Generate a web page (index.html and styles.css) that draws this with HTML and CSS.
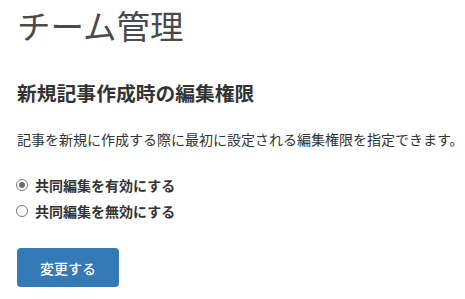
FILE: index.html
```html
<!DOCTYPE html>
<html lang="ja">
<head>
<meta charset="utf-8">
<link rel="stylesheet" href="styles.css">
</head>
<body>
<div class="page">
  <h1 class="title">チーム管理</h1>
  <h2 class="section-title">新規記事作成時の編集権限</h2>
  <p class="desc">記事を新規に作成する際に最初に設定される編集権限を指定できます。</p>
  <form class="form">
    <label class="radio"><input type="radio" name="mode" checked><span>共同編集を有効にする</span></label>
    <label class="radio"><input type="radio" name="mode"><span>共同編集を無効にする</span></label>
    <button type="button" class="btn">変更する</button>
  </form>
</div>
</body>
</html>
```

FILE: styles.css
```css
html, body {
  margin: 0;
  padding: 0;
  background: #fff;
}
body {
  font-family: "Noto Sans CJK JP", "Noto Sans", sans-serif;
  color: #333;
}
.page {
  padding: 3px 0 0 17px;
}
.title {
  margin: 0;
  font-size: 33.5px;
  line-height: 44px;
  font-weight: 400;
  color: #4a4a4a;
}
.section-title {
  margin: 32px 0 0;
  font-size: 19.8px;
  line-height: 28px;
  font-weight: 700;
  color: #333;
}
.desc {
  margin: 22px 0 0;
  font-size: 14px;
  line-height: 20px;
  white-space: nowrap;
}
.form {
  display: flex;
  flex-direction: column;
  align-items: flex-start;
  margin-top: 26px;
}
.radio {
  display: flex;
  align-items: center;
  gap: 7px;
  font-size: 14px;
  line-height: 20px;
  font-weight: 700;
  margin-bottom: 6px;
}
.radio input {
  appearance: none;
  -webkit-appearance: none;
  margin: 0 0 0 -1px;
  width: 12px;
  height: 12px;
  border: 1px solid #767676;
  border-radius: 50%;
  background: #fff;
  display: grid;
  place-items: center;
  box-sizing: border-box;
}
.radio input:checked::before {
  content: "";
  width: 6px;
  height: 6px;
  border-radius: 50%;
  background: #6b6b6b;
}
.btn {
  margin-top: 21px;
  width: 102px;
  height: 39px;
  border: 0;
  border-radius: 4px;
  background: #337ab7;
  color: #fff;
  font-family: inherit;
  font-size: 14px;
  font-weight: 500;
  padding: 0;
}
```
